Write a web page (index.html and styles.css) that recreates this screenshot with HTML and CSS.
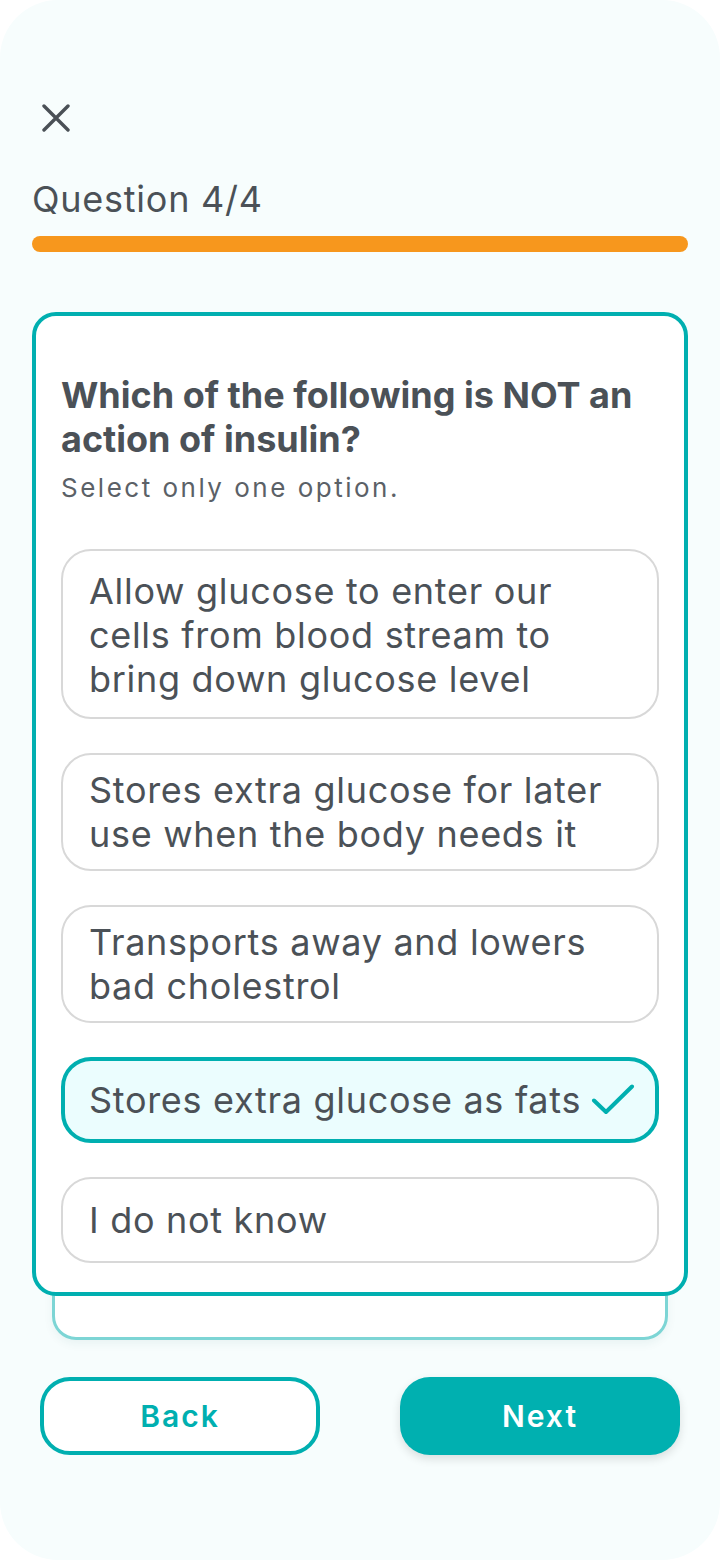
FILE: index.html
```html
<!DOCTYPE html>
<html lang="en">
<head>
<meta charset="utf-8">
<title>Quiz</title>
<link rel="stylesheet" href="styles.css">
</head>
<body>
<div class="screen">
  <button class="close" aria-label="Close">
    <svg width="28" height="28" viewBox="0 0 28 28"><path d="M2 2 L26 26 M26 2 L2 26" stroke="#4a5056" stroke-width="3.4" stroke-linecap="round" fill="none"/></svg>
  </button>
  <div class="q-label">Question 4/4</div>
  <div class="progress"></div>

  <div class="stack">
    <div class="card">
      <h1 class="title">Which of the following is NOT an action of insulin?</h1>
      <p class="hint">Select only one option.</p>
      <div class="options">
        <div class="option option-roomy">Allow glucose to enter our cells from blood stream to bring down glucose level</div>
        <div class="option">Stores extra glucose for later use when the body needs it</div>
        <div class="option">Transports away and lowers bad cholestrol</div>
        <div class="option selected"><span>Stores extra glucose as fats</span>
          <svg class="check" width="44" height="32" viewBox="0 0 44 32"><path d="M3 16.5 L15 28 L41 2.5" stroke="#00afb0" stroke-width="4" stroke-linecap="round" stroke-linejoin="round" fill="none"/></svg>
        </div>
        <div class="option">I do not know</div>
      </div>
    </div>
  </div>

  <div class="buttons">
    <button class="btn btn-back">Back</button>
    <button class="btn btn-next">Next</button>
  </div>
</div>
</body>
</html>
```

FILE: styles.css
```css
* { box-sizing: border-box; }

html, body {
  margin: 0;
  padding: 0;
  background: #ffffff;
}

body {
  font-family: "Inter", "Noto Sans", sans-serif;
  color: #4b5157;
}

.screen {
  width: 720px;
  height: 1560px;
  background: #f7fdfd;
  border-radius: 58px;
  padding: 0 32px;
  display: flex;
  flex-direction: column;
}

.close {
  margin: 104px 0 0 10px;
  width: 28px;
  height: 28px;
  padding: 0;
  border: none;
  background: none;
  display: block;
  align-self: flex-start;
}
.close svg { display: block; }

.q-label {
  margin-top: 45px;
  font-size: 36px;
  line-height: 44px;
  letter-spacing: 0.75px;
  color: #4b5157;
}

.progress {
  margin-top: 15px;
  height: 16px;
  border-radius: 8px;
  background: #f7971d;
}

.stack {
  margin-top: 60px;
  position: relative;
  padding-bottom: 44px;
}

.stack::before {
  content: "";
  position: absolute;
  left: 20px;
  right: 20px;
  bottom: 0;
  height: 120px;
  background: #ffffff;
  border: 3px solid #7dd5d5;
  border-radius: 24px;
  box-shadow: 0 4px 10px rgba(0, 80, 80, 0.06);
}

.card {
  position: relative;
  background: #ffffff;
  border: 4px solid #00afb0;
  border-radius: 24px;
  padding: 57px 25px 29px;
}

.title {
  margin: 0;
  font-size: 36px;
  line-height: 44px;
  font-weight: 700;
  color: #4b5157;
}

.hint {
  margin: 9px 0 0;
  font-size: 26px;
  line-height: 36px;
  letter-spacing: 2.5px;
  color: #5b6167;
}

.options {
  margin-top: 43px;
  display: flex;
  flex-direction: column;
  gap: 34px;
}

.option {
  min-height: 86px;
  border: 2px solid #d8d8d8;
  border-radius: 30px;
  padding: 13px 26px;
  font-size: 36px;
  line-height: 44px;
  letter-spacing: 0.7px;
  color: #4b5157;
  display: flex;
  align-items: center;
  background: #ffffff;
}

.option-roomy {
  padding-top: 18px;
  padding-bottom: 16px;
}

.option.selected {
  border: 4px solid #00afb0;
  background: #ebfdfe;
  padding: 12px 20px 12px 24px;
  justify-content: space-between;
}

.check { flex: none; display: block; }

.buttons {
  margin-top: 37px;
  padding: 0 8px;
  display: flex;
  justify-content: space-between;
}

.btn {
  width: 280px;
  height: 78px;
  border-radius: 30px;
  font-family: "Inter", "Noto Sans", sans-serif;
  font-size: 30px;
  font-weight: 600;
  letter-spacing: 2px;
  padding: 0;
}

.btn-back {
  background: #ffffff;
  border: 4px solid #00afb0;
  color: #00afb0;
}

.btn-next {
  background: #00b0b0;
  border: none;
  color: #ffffff;
  box-shadow: 0 4px 10px rgba(0, 0, 0, 0.12);
}
```
